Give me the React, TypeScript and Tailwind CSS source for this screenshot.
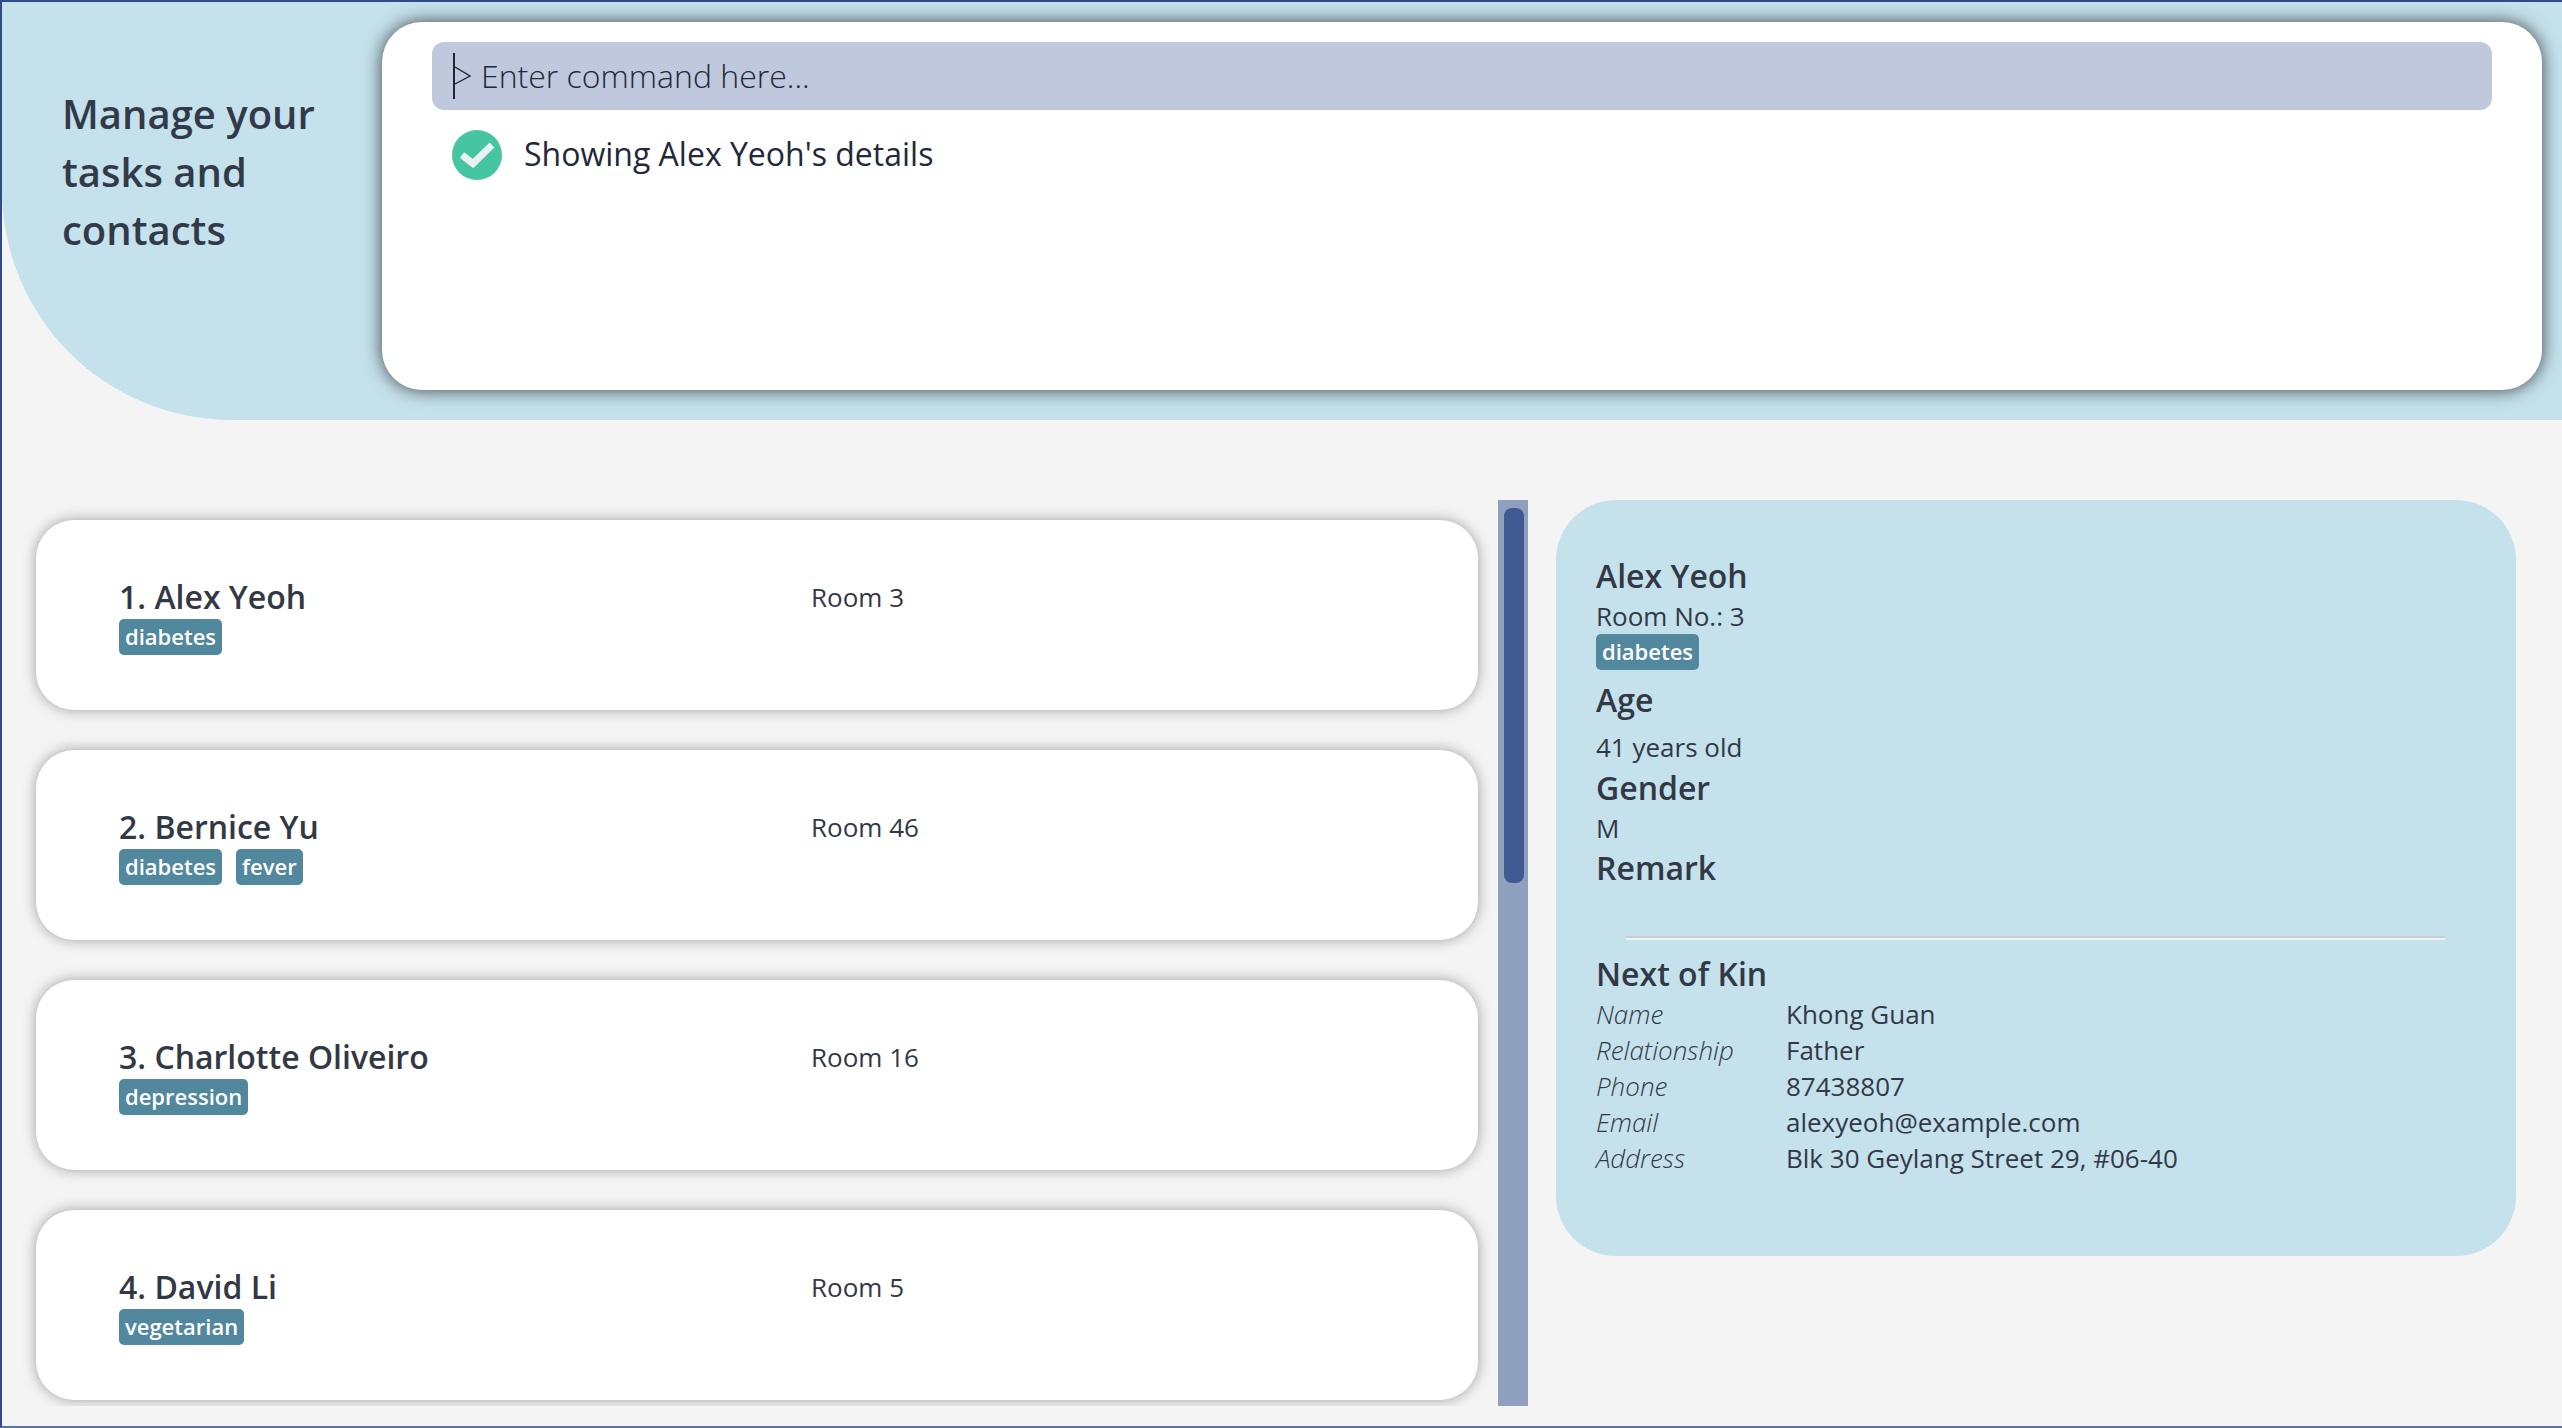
const FONT = "font-['Open_Sans',sans-serif]";

const people = [
  { name: '1. Alex Yeoh', room: 'Room 3', tags: ['diabetes'] },
  { name: '2. Bernice Yu', room: 'Room 46', tags: ['diabetes', 'fever'] },
  { name: '3. Charlotte Oliveiro', room: 'Room 16', tags: ['depression'] },
  { name: '4. David Li', room: 'Room 5', tags: ['vegetarian'] },
];

const kin = [
  ['Name', 'Khong Guan'],
  ['Relationship', 'Father'],
  ['Phone', '87438807'],
  ['Email', 'alexyeoh@example.com'],
  ['Address', 'Blk 30 Geylang Street 29, #06-40'],
];

function Tag({ children }: { children: string }) {
  return (
    <span className="h-[36px] px-[6px] rounded-[5px] bg-[#52889e] text-white text-[22px] leading-[35px] font-semibold">
      {children}
    </span>
  );
}

function PersonCard({ p }: { p: (typeof people)[number] }) {
  return (
    <div className="h-[190px] shrink-0 rounded-[38px] bg-white shadow-[0_0_14px_rgba(0,0,0,0.35)] flex pl-[83px] pt-[55px]">
      <div className="w-[692px]">
        <div className="h-[44px] text-[32px] leading-[44px] font-semibold text-[#333845]">{p.name}</div>
        <div className="flex gap-[14px]">
          {p.tags.map((t) => (
            <Tag key={t}>{t}</Tag>
          ))}
        </div>
      </div>
      <div className="text-[26px] leading-[44px] font-normal text-[#333845]">{p.room}</div>
    </div>
  );
}

export default function App() {
  return (
    <div className={`${FONT} w-[2562px] h-[1428px] overflow-hidden bg-[#f4f4f4] border-l-2 border-t-2 border-b-2 border-l-[#2f4a8a] border-t-[#2f4a8a] border-b-[#5a74a8] flex flex-col text-[#2d3344]`}>
      <header className="h-[418px] shrink-0 bg-[#c5e1ec] rounded-bl-[230px] flex pl-[60px] pt-[20px] pr-[18px]">
        <div className="w-[320px] pt-[63px] text-[40px] leading-[58px] font-semibold text-[#323a49]">
          Manage your
          <br />
          tasks and
          <br />
          contacts
        </div>
        <div className="w-[2160px] h-[368px] rounded-[40px] bg-white shadow-[0_0_18px_rgba(0,0,0,0.7)] px-[50px] pt-[20px]">
          <div className="h-[68px] rounded-[12px] bg-[#bfc8dc] flex items-center pl-[21px]">
            <svg width="20" height="46" viewBox="0 0 20 46" className="shrink-0">
              <path d="M1 0V46" stroke="#1f2433" strokeWidth="2" />
              <path d="M2 14L17 23L2 31" stroke="#1f2433" strokeWidth="1.4" fill="none" />
            </svg>
            <span className="ml-[8px] text-[32px] font-light text-[#22283a]">Enter command here...</span>
          </div>
          <div className="flex items-center mt-[20px] pl-[20px]">
            <svg width="50" height="50" viewBox="0 0 50 50" className="shrink-0">
              <circle cx="25" cy="25" r="25" fill="#45c5a2" />
              <path d="M10 25L21 33.5L40 15" stroke="#ebf0f0" strokeWidth="7" fill="none" />
            </svg>
            <span className="ml-[22px] text-[32px] font-normal text-[#23283a] relative -top-[1px]">Showing Alex Yeoh's details</span>
          </div>
        </div>
      </header>

      <main className="flex pt-[80px] pl-[16px]">
        <div className="w-[1480px] h-[906px] shrink-0 overflow-hidden flex flex-col gap-[40px] pt-[20px] pl-[18px] pr-[20px]">
          {people.map((p) => (
            <PersonCard key={p.name} p={p} />
          ))}
        </div>
        <div className="w-[30px] h-[906px] shrink-0 bg-[#8f9fbe] pt-[8px] pl-[6px] pr-[4px]">
          <div className="h-[375px] rounded-[8px] bg-[#415a92]" />
        </div>
        <aside className="ml-[28px] w-[960px] h-[756px] rounded-[60px] bg-[#c5e1ec] pt-[54px] pl-[40px] text-[#333845]">
          <div className="text-[32px] leading-[44px] font-semibold">Alex Yeoh</div>
          <div className="text-[26px] leading-[34px] mt-[1px]">Room No.: 3</div>
          <div className="flex mt-[1px]">
            <Tag>diabetes</Tag>
          </div>
          <div className="text-[32px] leading-[44px] font-semibold mt-[8px]">Age</div>
          <div className="text-[26px] leading-[36px] mt-[7px]">41 years old</div>
          <div className="text-[32px] leading-[44px] font-semibold mt-[1px]">Gender</div>
          <div className="text-[26px] leading-[36px]">M</div>
          <div className="text-[32px] leading-[44px] font-semibold">Remark</div>
          <div className="ml-[30px] w-[819px] h-[4px] mt-[46px] border-t-2 border-[#cdcdcd] bg-[#eaf3f6]" />
          <div className="text-[32px] leading-[44px] font-semibold mt-[12px]">Next of Kin</div>
          <div className="grid grid-cols-[190px_1fr] auto-rows-[36px] text-[26px] leading-[36px]">
            {kin.map(([k, v]) => (
              <div key={k} className="contents">
                <div className="italic font-light">{k}</div>
                <div>{v}</div>
              </div>
            ))}
          </div>
        </aside>
      </main>
    </div>
  );
}
